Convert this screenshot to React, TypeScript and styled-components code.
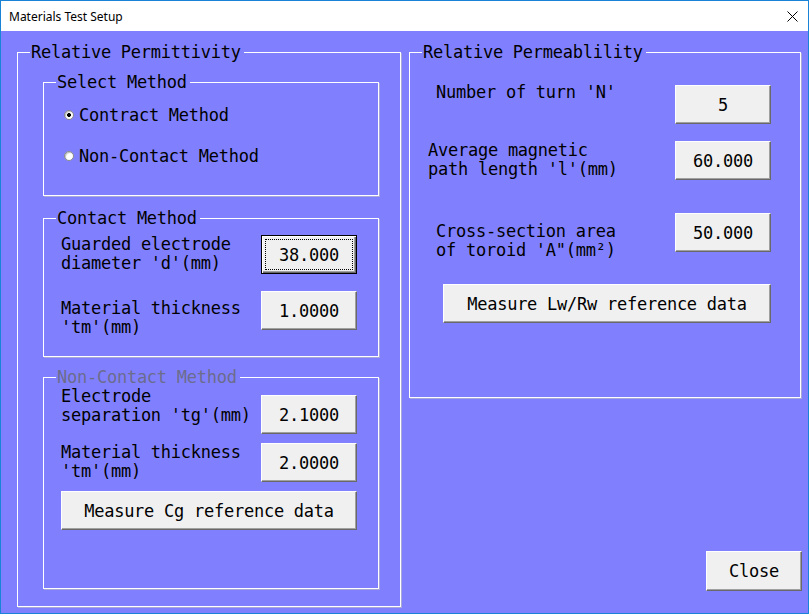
import styled, { createGlobalStyle } from 'styled-components'

const GlobalStyle = createGlobalStyle`
  html, body {
    margin: 0;
    padding: 0;
    background: #ffffff;
  }
  * {
    box-sizing: border-box;
  }
`

const Window = styled.div`
  width: 809px;
  height: 614px;
  border: 1px solid #1883d7;
  display: flex;
  flex-direction: column;
  background: #8080ff;
`

const TitleBar = styled.div`
  height: 30px;
  flex: none;
  background: #ffffff;
  display: flex;
  align-items: center;
  justify-content: space-between;
  padding: 0 10px 0 8px;
`

const Title = styled.span`
  font-family: 'Noto Sans', 'Liberation Sans', sans-serif;
  font-size: 12px;
  color: #000000;
`

const CloseGlyph = styled.svg`
  width: 11px;
  height: 11px;
  margin-top: 1px;
`

const Client = styled.div`
  flex: 1;
  display: grid;
  grid-template-columns: 384px 392px;
  column-gap: 8px;
  padding: 12px 6px 6px 16px;
  font-family: 'DejaVu Sans Mono', 'Liberation Mono', monospace;
  font-size: 17px;
  letter-spacing: -0.25px;
  color: #000000;
`

const Group = styled.fieldset<{ $height: number; $margin?: string }>`
  margin: ${(p) => p.$margin ?? '0'};
  padding: 0;
  min-width: 0;
  height: ${(p) => p.$height}px;
  border: 1px solid #ffffff;
  box-shadow: 1px 1px 0 #a8a8d8;
  display: flex;
  flex-direction: column;
`

const Legend = styled.legend<{ $disabled?: boolean }>`
  margin-left: 12px;
  padding: 0 3px 0 1px;
  line-height: 18px;
  height: 18px;
  color: ${(p) => (p.$disabled ? '#6c6c8c' : '#000000')};
`

const RightColumn = styled.div`
  display: flex;
  flex-direction: column;
`

const RadioList = styled.div`
  display: flex;
  flex-direction: column;
  gap: 21px;
  padding: 14px 0 0 20px;
`

const RadioRow = styled.label`
  display: flex;
  align-items: center;
  gap: 5px;
  height: 20px;
  line-height: 20px;
`

const RadioDot = styled.span<{ $checked?: boolean }>`
  width: 10px;
  height: 10px;
  border-radius: 50%;
  border: 1px solid #8a8a8a;
  background: ${(p) =>
    p.$checked
      ? 'radial-gradient(circle, #000 0 1.8px, #ffffff 2.2px)'
      : '#ffffff'};
  box-shadow: inset 1px 1px 1px #bdbdbd;
  flex: none;
`

const Rows = styled.div<{ $top: number; $gap: number; $right: number }>`
  display: flex;
  flex-direction: column;
  gap: ${(p) => p.$gap}px;
  padding: ${(p) => p.$top}px ${(p) => p.$right}px 0 0;
`

const Row = styled.div<{ $gap?: number }>`
  display: flex;
  justify-content: space-between;
  align-items: flex-start;
  margin-top: ${(p) => p.$gap ?? 0}px;
`

const FieldLabel = styled.div<{ $left: number; $offset?: number }>`
  margin-left: ${(p) => p.$left}px;
  margin-top: ${(p) => p.$offset ?? 0}px;
  line-height: 19px;
  white-space: nowrap;
`

const Button = styled.button<{ $width?: number; $focused?: boolean; $left?: number }>`
  position: relative;
  width: ${(p) => p.$width ?? 96}px;
  height: 39px;
  flex: none;
  margin-left: ${(p) => p.$left ?? 0}px;
  padding: 0;
  font: inherit;
  letter-spacing: inherit;
  color: #000000;
  background: #f0f0f0;
  border: 1px solid;
  border-color: ${(p) =>
    p.$focused ? '#000000' : '#ffffff #696969 #696969 #ffffff'};
  box-shadow: ${(p) =>
    p.$focused
      ? 'inset 1px 1px 0 #ffffff, inset -1px -1px 0 #696969, inset -2px -2px 0 #a0a0a0'
      : 'inset -1px -1px 0 #a0a0a0'};

  ${(p) =>
    p.$focused &&
    `
    &::after {
      content: '';
      position: absolute;
      inset: 3px;
      border: 1px dotted #000000;
    }
  `}
`

const CloseButton = styled(Button)`
  height: 40px;
  margin-top: auto;
  margin-bottom: 16px;
  align-self: flex-end;
  margin-right: -1px;
`

export default function App() {
  return (
    <>
      <GlobalStyle />
      <Window>
        <TitleBar>
          <Title>Materials Test Setup</Title>
          <CloseGlyph viewBox="0 0 11 11">
            <path d="M0.5 0.5 L10.5 10.5 M10.5 0.5 L0.5 10.5" stroke="#000" strokeWidth="1" fill="none" />
          </CloseGlyph>
        </TitleBar>
        <Client>
          <Group $height={564}>
            <Legend>Relative Permittivity</Legend>

            <Group $height={123} $margin="12px 21px 0 25px">
              <Legend>Select Method</Legend>
              <RadioList>
                <RadioRow>
                  <RadioDot $checked />
                  Contract Method
                </RadioRow>
                <RadioRow>
                  <RadioDot />
                  Non-Contact Method
                </RadioRow>
              </RadioList>
            </Group>

            <Group $height={148} $margin="13px 21px 0 25px">
              <Legend>Contact Method</Legend>
              <Rows $top={8} $gap={17} $right={21}>
                <Row>
                  <FieldLabel $left={17}>
                    Guarded electrode
                    <br />
                    diameter 'd'(mm)
                  </FieldLabel>
                  <Button $focused>38.000</Button>
                </Row>
                <Row>
                  <FieldLabel $left={17} $offset={8}>
                    Material thickness
                    <br />
                    'tm'(mm)
                  </FieldLabel>
                  <Button>1.0000</Button>
                </Row>
              </Rows>
            </Group>

            <Group $height={221} $margin="11px 21px 0 25px">
              <Legend $disabled>Non-Contact Method</Legend>
              <Rows $top={9} $gap={9} $right={21}>
                <Row>
                  <FieldLabel $left={17} $offset={-8}>
                    Electrode
                    <br />
                    separation 'tg'(mm)
                  </FieldLabel>
                  <Button>2.1000</Button>
                </Row>
                <Row>
                  <FieldLabel $left={17}>
                    Material thickness
                    <br />
                    'tm'(mm)
                  </FieldLabel>
                  <Button>2.0000</Button>
                </Row>
                <Row>
                  <Button $width={296} $left={17}>
                    Measure Cg reference data
                  </Button>
                </Row>
              </Rows>
            </Group>
          </Group>

          <RightColumn>
            <Group $height={355}>
              <Legend>Relative Permeablility</Legend>
              <Rows $top={24} $gap={0} $right={29}>
                <Row>
                  <FieldLabel $left={26} $offset={-2}>
                    Number of turn 'N'
                  </FieldLabel>
                  <Button>5</Button>
                </Row>
                <Row $gap={17}>
                  <FieldLabel $left={18}>
                    Average magnetic
                    <br />
                    path length 'l'(mm)
                  </FieldLabel>
                  <Button>60.000</Button>
                </Row>
                <Row $gap={33}>
                  <FieldLabel $left={26} $offset={9}>
                    Cross-section area
                    <br />
                    of toroid 'A"(mm²)
                  </FieldLabel>
                  <Button>50.000</Button>
                </Row>
                <Row $gap={24}>
                  <Button $width={328} $left={33}>
                    Measure Lw/Rw reference data
                  </Button>
                </Row>
              </Rows>
            </Group>
            <CloseButton>Close</CloseButton>
          </RightColumn>
        </Client>
      </Window>
    </>
  )
}
